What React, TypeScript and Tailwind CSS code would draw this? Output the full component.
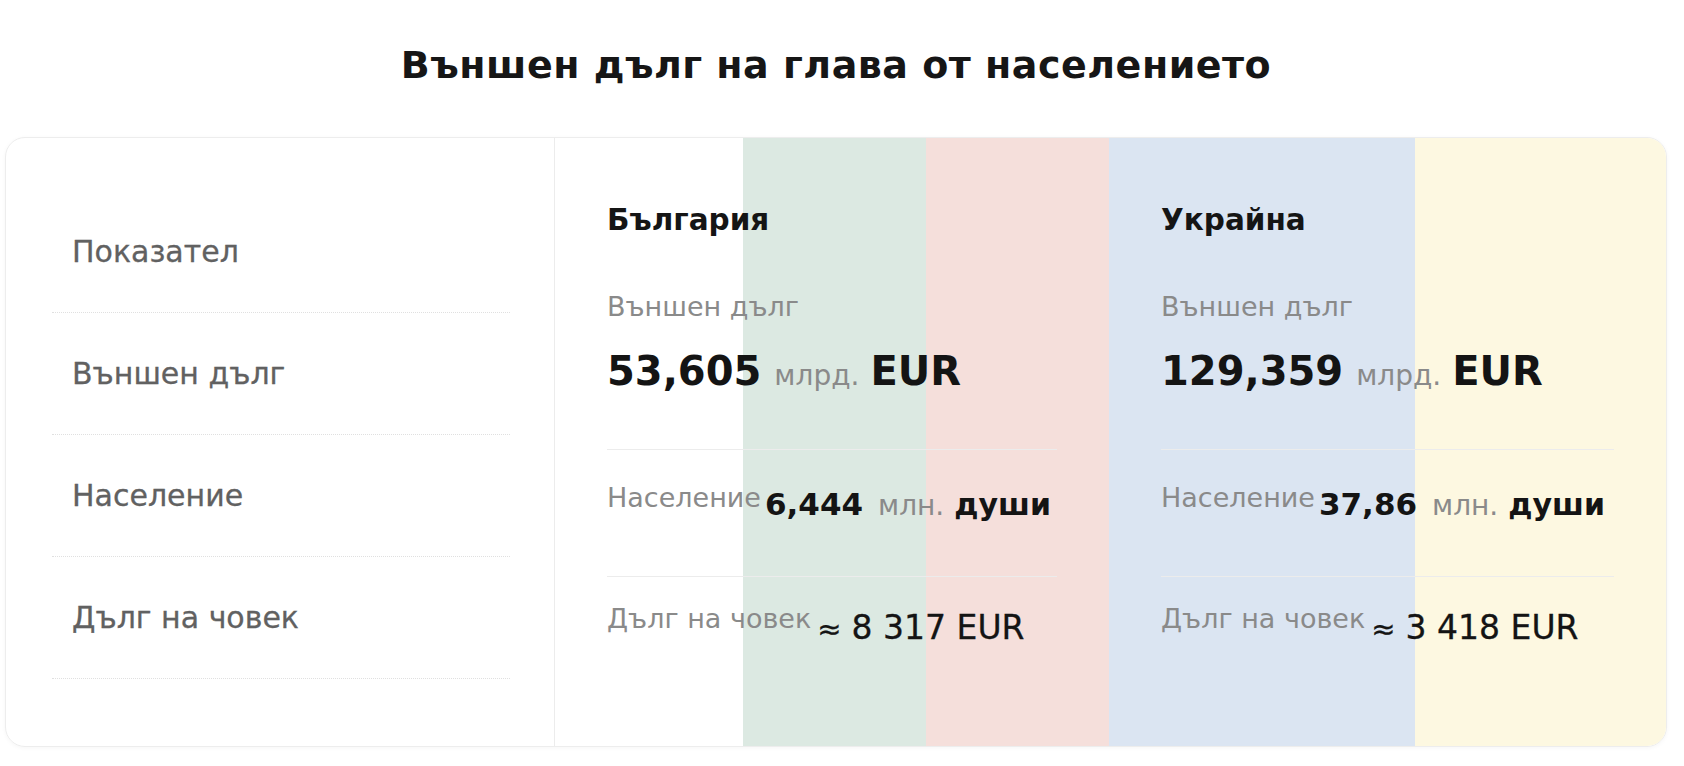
import React from "react";

const indicators = ["Показател", "Външен дълг", "Население", "Дълг на човек"];

const countries = [
  {
    name: "България",
    bg: "bg-[linear-gradient(to_right,#ffffff_0%,#ffffff_33.9%,#dce9e2_33.9%,#dce9e2_67%,#f5dfdb_67%,#f5dfdb_100%)]",
    debt: "53,605",
    pop: "6,444",
    perPerson: "8 317",
  },
  {
    name: "Украйна",
    bg: "bg-[linear-gradient(to_right,#dbe5f2_0%,#dbe5f2_55%,#fdf8e1_55%,#fdf8e1_100%)]",
    debt: "129,359",
    pop: "37,86",
    perPerson: "3 418",
  },
];

function CountryColumn({ c }: { c: (typeof countries)[number] }) {
  return (
    <div className={`${c.bg} px-[52px] pt-[65px]`}>
      <h3 className="text-[29.5px] font-bold leading-[35px] text-[#151515]">{c.name}</h3>

      <div className="border-b border-[#ececec] pb-[52px]">
        <p className="mt-[53px] text-[27px] leading-[32px] text-[#8a8a8a]">Външен дълг</p>
        <div className="mt-[24px] flex items-baseline text-[#141414]">
          <span className="text-[40px] font-bold leading-[48px]">{c.debt}</span>
          <span className="ml-[13px] text-[28px] text-[#8a8a8a]">млрд.</span>
          <span className="ml-[11px] text-[40px] font-bold leading-[48px]">EUR</span>
        </div>
      </div>

      <div className="flex h-[127px] items-start border-b border-[#ececec] pt-[32px]">
        <span className="text-[27px] leading-[32px] text-[#8a8a8a]">Население</span>
        <div className="ml-[4px] mt-[3px] flex items-baseline text-[#141414]">
          <span className="text-[31px] font-bold leading-[36px]">{c.pop}</span>
          <span className="ml-[15px] text-[28px] text-[#8a8a8a]">млн.</span>
          <span className="ml-[10px] text-[30px] font-bold leading-[36px]">души</span>
        </div>
      </div>

      <div className="flex items-start pt-[26px]">
        <span className="text-[27px] leading-[32px] text-[#8a8a8a]">Дълг на човек</span>
        <div className="ml-[6px] mt-[4px] flex items-baseline text-[#141414] [-webkit-text-stroke:0.3px_#141414]">
          <span className="text-[29px]">≈</span>
          <span className="ml-[10px] text-[33px] leading-[42px]">{c.perPerson} EUR</span>
        </div>
      </div>
    </div>
  );
}

export default function App() {
  return (
    <div className="min-h-screen bg-white font-['DejaVu_Sans',sans-serif]">
      <div className="ml-[5px] w-[1662px]">
        <h1 className="pt-[43px] text-center text-[38px] font-bold leading-[44px] tracking-[0.5px] text-[#161616]">
          Външен дълг на глава от населението
        </h1>

        <div className="mt-[50px] grid h-[610px] grid-cols-[549px_554px_1fr] overflow-hidden rounded-[20px] border border-[#ededed] shadow-[0_1px_4px_rgba(0,0,0,0.04)]">
          <div className="border-r border-[#ececec] pl-[46px] pr-[44px] pt-[53px]">
            {indicators.map((label) => (
              <div
                key={label}
                className="flex h-[122px] items-center border-b border-dotted border-[#e0e0e0] pl-[20px] text-[30px] text-[#616161] [-webkit-text-stroke:0.3px_#616161]"
              >
                {label}
              </div>
            ))}
          </div>
          {countries.map((c) => (
            <CountryColumn key={c.name} c={c} />
          ))}
        </div>
      </div>
    </div>
  );
}
